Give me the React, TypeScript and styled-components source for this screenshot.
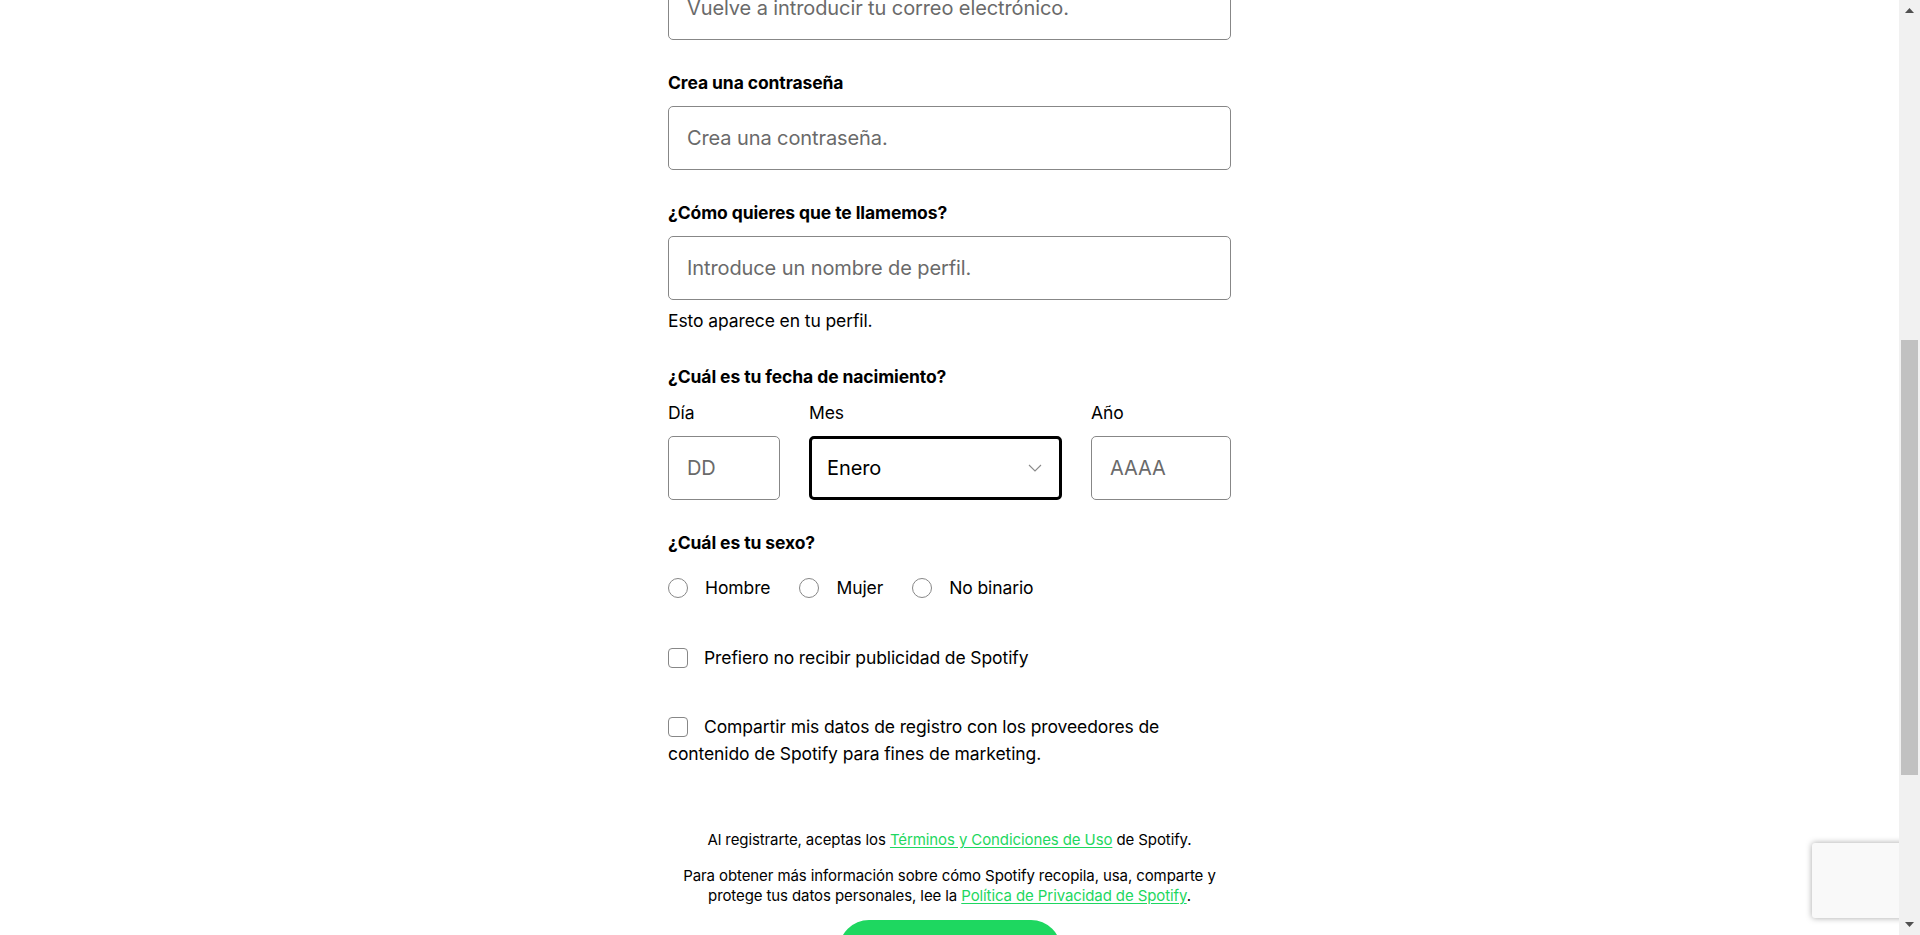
import React from "react";
import styled, { createGlobalStyle } from "styled-components";

const Global = createGlobalStyle`
  html, body {
    margin: 0;
    padding: 0;
    height: 935px;
    overflow: hidden;
    background: #ffffff;
  }
  body {
    font-family: Inter, "Noto Sans", sans-serif;
    color: #000000;
    letter-spacing: -0.1px;
    -webkit-font-smoothing: antialiased;
  }
  #root { height: 935px; }
  * { box-sizing: border-box; }
`;

const Shell = styled.div`
  display: flex;
  height: 935px;
  overflow: hidden;
`;

const Page = styled.main`
  position: relative;
  flex: 1;
  display: flex;
  align-items: flex-start;
  justify-content: center;
  overflow: hidden;
`;

const Form = styled.form`
  width: 563px;
  flex-shrink: 0;
  margin-top: -60px;
  display: flex;
  flex-direction: column;
  & > * { flex-shrink: 0; }
`;

const Field = styled.div<{ $mb?: number }>`
  display: flex;
  flex-direction: column;
  margin-bottom: ${(p) => (p.$mb ?? 30)}px;
`;

const Label = styled.label`
  font-size: 17.5px;
  font-weight: 700;
  line-height: 26px;
  padding-bottom: 10px;
`;

const Legend = styled.div<{ $mb?: number }>`
  font-size: 17.5px;
  font-weight: 700;
  line-height: 26px;
  margin-bottom: ${(p) => p.$mb ?? 0}px;
`;

const SubLabel = styled.label`
  font-size: 17.5px;
  font-weight: 400;
  line-height: 26px;
  padding-bottom: 10px;
`;

const TextInput = styled.input`
  height: 64px;
  width: 100%;
  border: 1px solid #878787;
  border-radius: 5px;
  padding: 0 18px;
  font-family: inherit;
  font-size: 20px;
  letter-spacing: -0.1px;
  color: #000;
  background: #fff;
  outline: none;
  &::placeholder { color: #6a6a6a; }
`;

const Helper = styled.div`
  font-size: 17.5px;
  line-height: 26px;
  margin-top: 8px;
`;

const DateRow = styled.div`
  display: grid;
  grid-template-columns: 112px 1fr 140px;
  column-gap: 29px;
`;

const DateCol = styled.div`
  display: flex;
  flex-direction: column;
`;

const SelectBox = styled.div`
  height: 64px;
  border: 3px solid #000;
  border-radius: 5px;
  padding: 0 17px 0 15px;
  display: flex;
  align-items: center;
  justify-content: space-between;
  font-size: 20px;
  color: #000;
`;

const RadioGroup = styled.div`
  display: flex;
  gap: 29px;
  margin-top: 19px;
  margin-bottom: 43px;
`;

const RadioItem = styled.label`
  display: flex;
  align-items: center;
  gap: 17px;
  font-size: 17.5px;
  line-height: 26px;
`;

const RadioCircle = styled.span`
  width: 20px;
  height: 20px;
  border-radius: 50%;
  border: 1px solid #878787;
  background: #fff;
  flex-shrink: 0;
`;

const CheckRow = styled.label<{ $mb?: number }>`
  display: block;
  font-size: 17.5px;
  line-height: 27px;
  margin-bottom: ${(p) => p.$mb ?? 0}px;
`;

const CheckSquare = styled.span`
  display: inline-block;
  vertical-align: -4px;
  width: 20px;
  height: 20px;
  border: 1px solid #878787;
  border-radius: 4px;
  margin-right: 16px;
  background: #fff;
`;

const Legal = styled.p<{ $mt?: number }>`
  margin: ${(p) => p.$mt ?? 0}px 0 0;
  text-align: center;
  font-size: 15px;
  line-height: 20px;
  color: #000;
`;

const Link = styled.a`
  color: #1ed760;
  text-decoration: underline;
  text-underline-offset: 2px;
`;

const SubmitButton = styled.button`
  align-self: center;
  margin-top: 14px;
  width: 222px;
  height: 60px;
  border: none;
  border-radius: 500px;
  background: #1ed760;
  color: #000;
  font-family: inherit;
  font-size: 20px;
  font-weight: 700;
`;

const Scrollbar = styled.aside`
  width: 21px;
  height: 935px;
  background: #f1f1f1;
  display: flex;
  flex-direction: column;
`;

const ArrowBtn = styled.div`
  height: 21px;
  display: flex;
  align-items: center;
  justify-content: center;
`;

const Track = styled.div`
  flex: 1;
  display: flex;
  flex-direction: column;
  padding: 0 2px;
`;

const Thumb = styled.div`
  background: #c1c1c1;
`;

const Badge = styled.div`
  position: absolute;
  right: -233px;
  bottom: 17px;
  width: 320px;
  height: 75px;
  background: #f9f9f9;
  border-radius: 3px;
  box-shadow: 0 0 6px rgba(0, 0, 0, 0.35);
`;

const Chevron = () => (
  <svg width="14" height="8" viewBox="0 0 14 8" fill="none">
    <polyline points="1,1 7,7 13,1" stroke="#8a8a8a" strokeWidth="1.1" />
  </svg>
);

const Tri = ({ up }: { up: boolean }) => (
  <svg width="9" height="5" viewBox="0 0 9 5">
    <polygon points={up ? "0,5 4.5,0 9,5" : "0,0 9,0 4.5,5"} fill="#505050" />
  </svg>
);

export default function App() {
  const thumbTop = 319;
  const thumbHeight = 435;
  return (
    <>
      <Global />
      <Shell>
        <Page>
          <Form onSubmit={(e) => e.preventDefault()}>
            <Field>
              <Label>Confirma tu correo electrónico</Label>
              <TextInput placeholder="Vuelve a introducir tu correo electrónico." />
            </Field>
            <Field>
              <Label>Crea una contraseña</Label>
              <TextInput type="password" placeholder="Crea una contraseña." />
            </Field>
            <Field>
              <Label>¿Cómo quieres que te llamemos?</Label>
              <TextInput placeholder="Introduce un nombre de perfil." />
              <Helper>Esto aparece en tu perfil.</Helper>
            </Field>
            <Field>
              <Legend $mb={10}>¿Cuál es tu fecha de nacimiento?</Legend>
              <DateRow>
                <DateCol>
                  <SubLabel>Día</SubLabel>
                  <TextInput placeholder="DD" />
                </DateCol>
                <DateCol>
                  <SubLabel>Mes</SubLabel>
                  <SelectBox>
                    <span>Enero</span>
                    <Chevron />
                  </SelectBox>
                </DateCol>
                <DateCol>
                  <SubLabel>Año</SubLabel>
                  <TextInput placeholder="AAAA" />
                </DateCol>
              </DateRow>
            </Field>
            <Legend>¿Cuál es tu sexo?</Legend>
            <RadioGroup>
              <RadioItem><RadioCircle />Hombre</RadioItem>
              <RadioItem><RadioCircle />Mujer</RadioItem>
              <RadioItem><RadioCircle />No binario</RadioItem>
            </RadioGroup>
            <CheckRow $mb={42}>
              <CheckSquare />Prefiero no recibir publicidad de Spotify
            </CheckRow>
            <CheckRow>
              <CheckSquare />Compartir mis datos de registro con los proveedores de
              <br />
              contenido de Spotify para fines de marketing.
            </CheckRow>
            <Legal $mt={63}>
              Al registrarte, aceptas los <Link href="#">Términos y Condiciones de Uso</Link> de Spotify.
            </Legal>
            <Legal $mt={16}>
              Para obtener más información sobre cómo Spotify recopila, usa, comparte y
              <br />
              protege tus datos personales, lee la <Link href="#">Política de Privacidad de Spotify</Link>.
            </Legal>
            <SubmitButton type="submit">Registrarte</SubmitButton>
          </Form>
          <Badge />
        </Page>
        <Scrollbar>
          <ArrowBtn><Tri up /></ArrowBtn>
          <Track>
            <Thumb style={{ marginTop: thumbTop, height: thumbHeight }} />
          </Track>
          <ArrowBtn><Tri up={false} /></ArrowBtn>
        </Scrollbar>
      </Shell>
    </>
  );
}
